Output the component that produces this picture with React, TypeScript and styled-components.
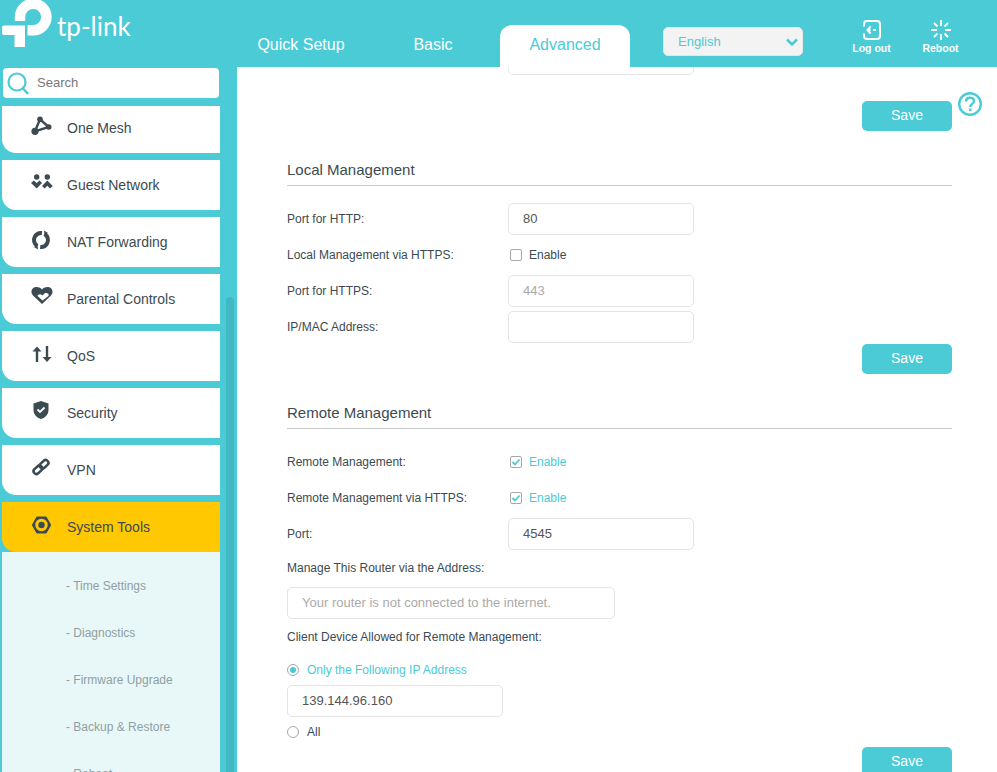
import React from 'react';
import styled, { createGlobalStyle } from 'styled-components';

const TEAL = '#4acbd6';
const SLATE = '#3c4a52';

const GlobalStyle = createGlobalStyle`
  html, body {
    margin: 0;
    height: 100%;
    overflow: hidden;
    background: ${TEAL};
  }
  * {
    box-sizing: border-box;
  }
  body {
    font-family: "Liberation Sans", Arial, sans-serif;
  }
`;

const Page = styled.div`
  width: 997px;
  height: 772px;
  display: flex;
  flex-direction: column;
  overflow: hidden;
`;

const Header = styled.header`
  height: 67px;
  flex: none;
  display: flex;
  background: ${TEAL};
`;

const Brand = styled.div`
  width: 236px;
  height: 48px;
  display: flex;
  align-items: center;
  color: #fff;
`;

const BrandName = styled.span`
  margin: 4px 0 0 2px;
  font-family: Lato, "Open Sans", sans-serif;
  font-weight: 400;
  font-size: 26px;
`;

const Tabs = styled.nav`
  display: flex;
  gap: 2px;
  align-self: flex-end;
`;

const Tab = styled.div<{ $active?: boolean }>`
  width: 130px;
  height: 42px;
  padding-bottom: 2px;
  display: flex;
  align-items: center;
  justify-content: center;
  font-size: 16px;
  border-radius: 12px 12px 0 0;
  color: ${(p) => (p.$active ? TEAL : '#fff')};
  background: ${(p) => (p.$active ? '#fff' : 'transparent')};
`;

const LangSelect = styled.div`
  width: 140px;
  height: 29px;
  margin: 27px 0 0 33px;
  padding: 0 3px 0 14px;
  display: flex;
  align-items: center;
  justify-content: space-between;
  font-size: 13px;
  color: ${TEAL};
  background: #f3f3f3;
  border: 1px solid #e6e6e6;
  border-radius: 5px;
`;

const Actions = styled.div`
  display: flex;
  margin-left: 34px;
`;

const ActionButton = styled.div`
  width: 69px;
  padding-top: 20px;
  display: flex;
  flex-direction: column;
  align-items: center;
  gap: 2px;
  color: #fff;
  font-size: 10.5px;
  font-weight: 700;
`;

const Body = styled.div`
  flex: 1;
  min-height: 0;
  display: flex;
`;

const Sidebar = styled.aside`
  position: relative;
  width: 237px;
  flex: none;
  display: flex;
  flex-direction: column;
  overflow: hidden;
  background: ${TEAL};
`;

const SearchBox = styled.div`
  width: 216px;
  height: 30px;
  flex: none;
  margin: 1px 0 0 3px;
  padding: 0 0 2px 3px;
  display: flex;
  align-items: center;
  gap: 5px;
  font-size: 13px;
  color: #777;
  background: #fff;
  border-radius: 4px;
  svg {
    margin-top: 2px;
  }
`;

const NavScroll = styled.div`
  flex: 1;
  min-height: 0;
  margin-top: 8px;
  overflow: hidden;
`;

const NavList = styled.div`
  width: 218px;
  margin: -3px 0 0 2px;
  display: flex;
  flex-direction: column;
  gap: 7px;
`;

const NavItem = styled.div<{ $active?: boolean }>`
  height: 50px;
  padding-left: 27px;
  display: flex;
  align-items: center;
  gap: 14px;
  font-size: 14px;
  color: ${SLATE};
  background: ${(p) => (p.$active ? '#ffc800' : '#fff')};
  border-bottom-left-radius: 14px;
  svg {
    margin-bottom: 6px;
    flex: none;
  }
`;

const SubMenu = styled.div`
  margin-top: -7px;
  padding-top: 10px;
  background: #e8f8f8;
`;

const SubItem = styled.div`
  height: 47px;
  padding-left: 64px;
  display: flex;
  align-items: center;
  font-size: 12px;
  color: #8f9fa3;
`;

const ScrollThumb = styled.div`
  position: absolute;
  left: 226px;
  top: 230px;
  bottom: 0;
  width: 8px;
  background: #43b8c3;
  border-radius: 4px 4px 0 0;
`;

const Main = styled.main`
  position: relative;
  flex: 1;
  min-width: 0;
  overflow: hidden;
  background: #fff;
  padding-left: 50px;
`;

const Content = styled.div`
  width: 665px;
  margin-top: -24px;
`;

const HelpIcon = styled.svg`
  position: absolute;
  top: 25px;
  right: 15px;
`;

const Section = styled.section`
  display: flex;
  flex-direction: column;
`;

const SectionTitle = styled.h2`
  margin: 24px 0 0;
  height: 31px;
  line-height: 30px;
  font-size: 15px;
  font-weight: 400;
  color: ${SLATE};
  border-bottom: 1px solid #c9c9c9;
`;

const Rows = styled.div`
  margin-top: 17px;
  display: flex;
  flex-direction: column;
  gap: 4px;
`;

const Row = styled.div`
  height: 32px;
  display: grid;
  grid-template-columns: 221px 1fr;
  align-items: center;
  font-size: 12px;
  color: ${SLATE};
`;

const TextField = styled.input<{ $width?: number }>`
  display: block;
  width: ${(p) => p.$width ?? 186}px;
  height: 32px;
  padding: 0 14px 2px;
  font: 13px "Liberation Sans", Arial, sans-serif;
  color: #555;
  background: #fff;
  border: 1px solid #e4e4e4;
  border-radius: 5px;
  outline: none;
  &:disabled {
    color: #aaa;
  }
  &::placeholder {
    color: #aaa;
    opacity: 1;
  }
`;

const FieldLabel = styled.div`
  height: 28px;
  margin-top: 4px;
  display: flex;
  align-items: center;
  font-size: 12px;
  color: ${SLATE};
`;

const FieldSlot = styled.div<{ $top: number }>`
  margin-top: ${(p) => p.$top}px;
`;

const Choice = styled.div<{ $on?: boolean }>`
  display: flex;
  align-items: center;
  gap: 7px;
  font-size: 12px;
  color: ${(p) => (p.$on ? TEAL : SLATE)};
`;

const CheckChoice = styled(Choice)`
  margin-left: 2px;
`;

const RadioChoice = styled(Choice)<{ $top: number }>`
  height: 28px;
  gap: 8px;
  margin-top: ${(p) => p.$top}px;
`;

const CheckBox = styled.span`
  width: 12px;
  height: 12px;
  flex: none;
  display: flex;
  align-items: center;
  justify-content: center;
  background: #fff;
  border: 1px solid #a8a8a8;
  border-radius: 2px;
`;

const Radio = styled.span<{ $on?: boolean }>`
  width: 12px;
  height: 12px;
  flex: none;
  display: flex;
  align-items: center;
  justify-content: center;
  border: 1px solid #a8a8a8;
  border-radius: 50%;
  &::after {
    content: '';
    width: 6px;
    height: 6px;
    border-radius: 50%;
    background: ${(p) => (p.$on ? TEAL : 'transparent')};
  }
`;

const SaveRow = styled.div<{ $top: number }>`
  margin-top: ${(p) => p.$top}px;
  display: flex;
  justify-content: flex-end;
`;

const SaveButton = styled.button`
  width: 90px;
  height: 30px;
  padding: 0 0 2px;
  font: 14px "Liberation Sans", Arial, sans-serif;
  color: #fff;
  background: ${TEAL};
  border: none;
  border-radius: 5px;
`;

const Logo = () => (
  <svg width="55" height="48" viewBox="0 0 55 48" fill="none">
    <path d="M20 21V17A13.2 13.2 0 1 1 33 30.2H27.5" stroke="#fff" strokeWidth="10.5" />
    <path d="M2 27.5a2 2 0 0 1 2-2H25V47H14.5V35H4a2 2 0 0 1-2-2Z" fill="#fff" />
  </svg>
);

const Icon = ({ children }: { children: React.ReactNode }) => (
  <svg width="24" height="24" viewBox="0 0 24 24" fill="none">
    {children}
  </svg>
);

const icons: Record<string, React.ReactNode> = {
  mesh: (
    <>
      <path d="M6 18.3 11 6.3 19.7 14Z" stroke={SLATE} strokeWidth="2.4" />
      <circle cx="11" cy="6.3" r="2.8" fill={SLATE} />
      <circle cx="19.7" cy="14" r="2.8" fill={SLATE} />
      <circle cx="6" cy="18.3" r="3.6" fill={SLATE} />
    </>
  ),
  guest: (
    <>
      <circle cx="7.7" cy="7" r="2.7" fill={SLATE} />
      <circle cx="18.3" cy="7" r="2.7" fill={SLATE} />
      <path d="M2 13 4.8 10.5 7.7 13 10.6 10.5 13 13 7.7 18.5Z" fill={SLATE} />
      <path d="M18.3 10.5 23.8 16 21 18.5 18.3 15.8 15.6 18.5 13 16Z" fill={SLATE} />
    </>
  ),
  nat: (
    <>
      <circle cx="12" cy="13" r="7" stroke={SLATE} strokeWidth="4" strokeDasharray="19 3" transform="rotate(-60 12 13)" />
      <path d="M15 3.500 19 6 15.500 8.500ZM9 22.500 5 20 8.500 17.500Z" fill={SLATE} />
    </>
  ),
  heart: (
    <>
      <path d="M13 20 4 11.500C1 8.500 2.500 3 7.500 3 10 3 12 4 13 5.500 14 4 16 3 18.500 3 23.500 3 25 8.500 22 11.500Z" fill={SLATE} />
      <path d="M13.500 16.500 8.500 12C8.800 11 10.500 9.800 12 10.500L13.500 11.500 16 9C18 8.500 20.500 9.500 19.500 12Z" fill="#fff" />
    </>
  ),
  qos: (
    <>
      <path d="M8 21V8M18 5V17" stroke={SLATE} strokeWidth="2.400" />
      <path d="M3.500 10.500 8 5.500 12.500 10.500ZM13.500 16 18 21 22.500 16Z" fill={SLATE} />
    </>
  ),
  security: (
    <>
      <path d="M12 3 19.500 5.500V12C19.500 17 15.500 20 12 21 8.500 20 4.500 17 4.500 12V5.500Z" fill={SLATE} />
      <path d="M8.500 11.500 11 14 15.500 9.500" stroke="#fff" strokeWidth="1.800" />
    </>
  ),
  vpn: (
    <g stroke={SLATE} strokeWidth="2.500" transform="rotate(-42 12 12)">
      <rect x="3" y="9.200" width="9.800" height="5.600" rx="2.800" />
      <rect x="11.200" y="9.200" width="9.800" height="5.600" rx="2.800" />
    </g>
  ),
  tools: (
    <g transform="translate(0.500 1)">
      <path d="M4 12 8 5H16L20 12 16 19H8Z" fill={SLATE} stroke={SLATE} strokeWidth="3" strokeLinejoin="round" />
      <circle cx="12" cy="12" r="6.200" fill="#ffc800" />
      <circle cx="12" cy="12" r="3.200" fill={SLATE} />
    </g>
  ),
};

const navItems = [
  { label: 'One Mesh', icon: 'mesh' },
  { label: 'Guest Network', icon: 'guest' },
  { label: 'NAT Forwarding', icon: 'nat' },
  { label: 'Parental Controls', icon: 'heart' },
  { label: 'QoS', icon: 'qos' },
  { label: 'Security', icon: 'security' },
  { label: 'VPN', icon: 'vpn' },
  { label: 'System Tools', icon: 'tools', active: true },
];

const subItems = ['Time Settings', 'Diagnostics', 'Firmware Upgrade', 'Backup & Restore', 'Reboot'];

const Tick = () => (
  <svg width="10" height="10" viewBox="0 0 10 10" fill="none">
    <path d="M1.500 5 4 7.500 8.500 2.500" stroke={TEAL} strokeWidth="1.800" />
  </svg>
);

const App: React.FC = () => (
  <Page>
    <GlobalStyle />
    <Header>
      <Brand>
        <Logo />
        <BrandName>tp-link</BrandName>
      </Brand>
      <Tabs>
        <Tab>Quick Setup</Tab>
        <Tab>Basic</Tab>
        <Tab $active>Advanced</Tab>
      </Tabs>
      <LangSelect>
        English
        <svg width="14" height="10" viewBox="0 0 14 10" fill="none">
          <path d="M2 2.500 7 7.500 12 2.500" stroke={TEAL} strokeWidth="2.600" />
        </svg>
      </LangSelect>
      <Actions>
        <ActionButton>
          <svg width="20" height="20" viewBox="0 0 20 20" fill="none" stroke="#fff" strokeWidth="2">
            <path d="M2 6.500V4A3 3 0 0 1 5 1H15A3 3 0 0 1 18 4V16A3 3 0 0 1 15 19H5A3 3 0 0 1 2 16V13.500" />
            <path d="M8.500 6.500 5.500 10 8.500 13.500" />
            <path d="M6 10H8.500M11 10H14" />
          </svg>
          Log out
        </ActionButton>
        <ActionButton>
          <svg width="20" height="20" viewBox="0 0 20 20" fill="none" stroke="#fff" strokeWidth="1.800">
            <path d="M10 0V6M10 14V20M0 10H6M14 10H20M3 3 6.500 6.500M13.500 13.500 17 17M17 3 13.500 6.500M6.500 13.500 3 17" />
          </svg>
          Reboot
        </ActionButton>
      </Actions>
    </Header>
    <Body>
      <Sidebar>
        <SearchBox>
          <svg width="26" height="26" viewBox="0 0 26 26" fill="none" stroke={TEAL}>
            <circle cx="11" cy="12" r="8.500" strokeWidth="2.200" />
            <path d="M17 18.500 22 24" strokeWidth="2.600" />
          </svg>
          Search
        </SearchBox>
        <NavScroll>
          <NavList>
            {navItems.map((item) => (
              <NavItem key={item.label} $active={item.active}>
                <Icon>{icons[item.icon]}</Icon>
                {item.label}
              </NavItem>
            ))}
            <SubMenu>
              {subItems.map((item) => (
                <SubItem key={item}>- {item}</SubItem>
              ))}
            </SubMenu>
          </NavList>
        </NavScroll>
        <ScrollThumb />
      </Sidebar>
      <Main>
        <HelpIcon width="24" height="24" viewBox="0 0 24 24" fill="none" stroke={TEAL}>
          <circle cx="12" cy="12" r="10.800" strokeWidth="2.400" />
          <path d="M8 9.500C8 7 9.800 5.800 12 5.800 14.400 5.800 16 7.200 16 9.200 16 11.800 12.200 12 12.200 15" strokeWidth="2.400" />
          <path d="M12.200 16.500V19" strokeWidth="2.600" />
        </HelpIcon>
        <Content>
          <Section>
            <Row>
              <span />
              <TextField readOnly />
            </Row>
            <SaveRow $top={26}>
              <SaveButton>Save</SaveButton>
            </SaveRow>
          </Section>
          <Section>
            <SectionTitle>Local Management</SectionTitle>
            <Rows>
              <Row>
                Port for HTTP:
                <TextField readOnly defaultValue="80" />
              </Row>
              <Row>
                Local Management via HTTPS:
                <CheckChoice>
                  <CheckBox />
                  Enable
                </CheckChoice>
              </Row>
              <Row>
                Port for HTTPS:
                <TextField disabled defaultValue="443" />
              </Row>
              <Row>
                IP/MAC Address:
                <TextField readOnly />
              </Row>
            </Rows>
            <SaveRow $top={1}>
              <SaveButton>Save</SaveButton>
            </SaveRow>
          </Section>
          <Section>
            <SectionTitle>Remote Management</SectionTitle>
            <Rows>
              <Row>
                Remote Management:
                <CheckChoice $on>
                  <CheckBox>
                    <Tick />
                  </CheckBox>
                  Enable
                </CheckChoice>
              </Row>
              <Row>
                Remote Management via HTTPS:
                <CheckChoice $on>
                  <CheckBox>
                    <Tick />
                  </CheckBox>
                  Enable
                </CheckChoice>
              </Row>
              <Row>
                Port:
                <TextField readOnly defaultValue="4545" />
              </Row>
            </Rows>
            <FieldLabel>Manage This Router via the Address:</FieldLabel>
            <FieldSlot $top={5}>
              <TextField $width={328} readOnly placeholder="Your router is not connected to the internet." />
            </FieldSlot>
            <FieldLabel>Client Device Allowed for Remote Management:</FieldLabel>
            <RadioChoice $on $top={5}>
              <Radio $on />
              Only the Following IP Address
            </RadioChoice>
            <FieldSlot $top={1}>
              <TextField $width={216} readOnly defaultValue="139.144.96.160" />
            </FieldSlot>
            <RadioChoice $top={1}>
              <Radio />
              All
            </RadioChoice>
            <SaveRow $top={1}>
              <SaveButton>Save</SaveButton>
            </SaveRow>
          </Section>
        </Content>
      </Main>
    </Body>
  </Page>
);

export default App;
